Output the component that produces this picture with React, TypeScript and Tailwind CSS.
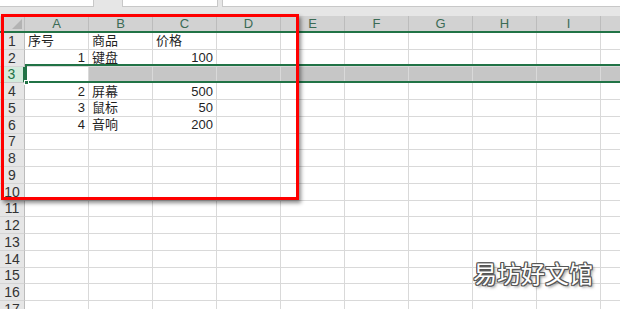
import React from "react";

const COLS = ["A", "B", "C", "D", "E", "F", "G", "H", "I", ""];

type Cell = { v: string; right?: boolean };
const DATA: Record<number, Cell[]> = {
  1: [{ v: "序号" }, { v: "商品" }, { v: "价格" }],
  2: [{ v: "1", right: true }, { v: "键盘" }, { v: "100", right: true }],
  4: [{ v: "2", right: true }, { v: "屏幕" }, { v: "500", right: true }],
  5: [{ v: "3", right: true }, { v: "鼠标" }, { v: "50", right: true }],
  6: [{ v: "4", right: true }, { v: "音响" }, { v: "200", right: true }],
};

const ROWS = Array.from({ length: 17 }, (_, i) => i + 1);

export default function App() {
  return (
    <div
      className="relative w-[620px] h-[309px] overflow-hidden bg-white text-[#1f1f1f]"
      style={{ fontFamily: '"Liberation Sans", "Noto Sans CJK SC", sans-serif' }}
    >
      {/* formula bar remnants */}
      <div className="flex h-[7px] bg-[#e6e6e6]">
        <div className="w-[94px] bg-white border-r border-b border-[#c8c8c8]" />
        <div className="ml-[28px] w-[96px] bg-white border-x border-b border-[#c8c8c8]" />
        <div className="ml-[4px] flex-1 bg-white border-l border-b border-[#c8c8c8]" />
      </div>
      <div className="h-[9px] bg-[#e6e6e6]" />

      {/* column headers */}
      <div className="flex h-[17px] bg-[#d2d2d2] border-b-2 border-[#217346]">
        <div className="relative w-[25px] shrink-0 border-r border-[#bcbcbc]">
          <svg className="absolute left-[12px] top-[3px]" width="10" height="10" viewBox="0 0 10 10">
            <polygon points="10,0 10,10 0,10" fill="#b3b3b3" />
          </svg>
        </div>
        {COLS.map((c, i) => (
          <div
            key={i}
            className="w-[64px] shrink-0 border-r border-[#bcbcbc] flex items-center justify-center text-[13px] leading-none text-[#3b6b55]"
          >
            {c}
          </div>
        ))}
      </div>

      {/* rows */}
      <div className="flex flex-col">
        {ROWS.map((r) => {
          const sel = r === 3;
          const cells = DATA[r] || [];
          return (
            <div key={r} className="flex h-[16.75px] shrink-0">
              <div
                className={
                  sel
                    ? "w-[25px] shrink-0 bg-[#d3ebdc] border-r-2 border-b border-r-[#217346] border-b-[#c8c8c8] flex items-center justify-center text-[14px] leading-none text-[#217346]"
                    : "w-[25px] shrink-0 bg-[#e6e6e6] border-r border-b border-r-[#bcbcbc] border-b-[#d4d4d4] flex items-center justify-center text-[14px] leading-none text-[#333]"
                }
              >
                {r}
              </div>
              {COLS.map((c, i) => {
                const cell = cells[i];
                const fill = sel && i > 0 ? "bg-[#c6c6c6]" : "bg-white";
                return (
                  <div
                    key={i}
                    className={`w-[64px] shrink-0 border-r border-b border-[#d9d9d9] ${fill} flex items-center px-[3px] text-[13px] leading-none ${
                      cell?.right ? "justify-end" : "justify-start"
                    }`}
                  >
                    {cell?.v}
                  </div>
                );
              })}
            </div>
          );
        })}
      </div>

      {/* row selection border */}
      <div className="absolute left-[25px] top-[64px] w-[600px] h-[19px] border-y-2 border-l-2 border-[#217346]" />
      <div className="absolute left-[24px] top-[80px] w-[5px] h-[5px] bg-[#217346] border border-white" />

      {/* red highlight box */}
      <div className="absolute left-[1px] top-[14px] w-[298px] h-[186px] border-[3px] border-[#ff0000] shadow-[2px_3px_4px_rgba(0,0,0,0.45)]" />

      {/* watermark */}
      <div
        className="absolute left-[473px] top-[261px] text-[24px] leading-none text-white tracking-[0px] [text-shadow:1px_0_#555,-1px_0_#555,0_1px_#555,0_-1px_#555,1px_1px_#555,-1px_-1px_#555,1px_-1px_#555,-1px_1px_#555,2px_2px_3px_rgba(0,0,0,0.5)]"
        style={{ fontFamily: '"Noto Sans CJK SC", sans-serif' }}
      >
        易坊好文馆
      </div>
    </div>
  );
}
